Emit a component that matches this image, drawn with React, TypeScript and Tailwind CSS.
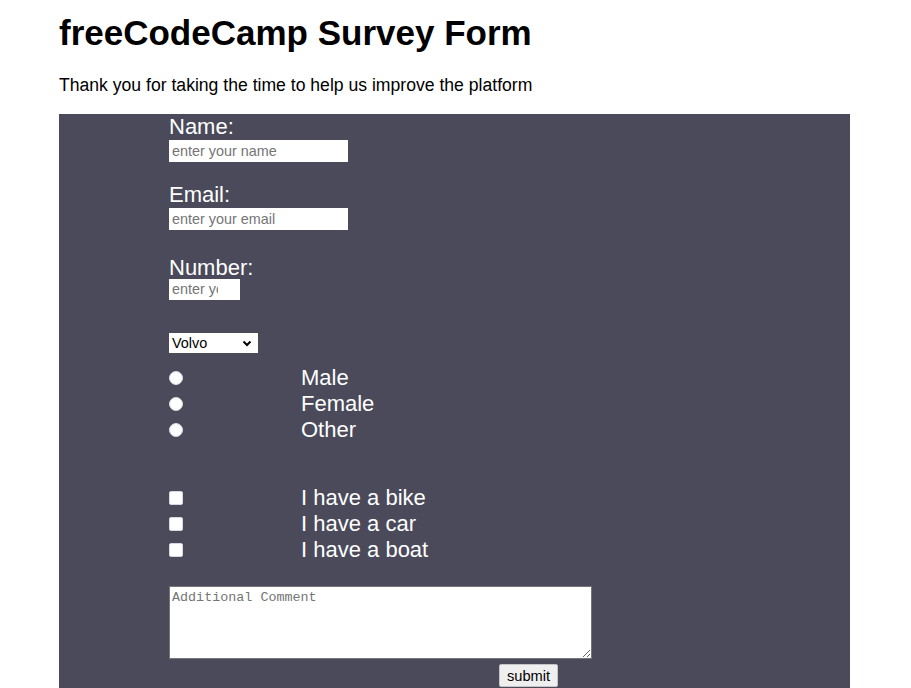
export default function App() {
  const genders = ['Male', 'Female', 'Other']
  const vehicles = ['I have a bike', 'I have a car', 'I have a boat']

  return (
    <div className="min-h-screen bg-white text-black font-['Liberation_Sans',Arial,sans-serif]">
      <div className="ml-[59px] w-[791px]">
        <h1 className="pt-[13px] text-[35px] font-bold leading-[40px]">freeCodeCamp Survey Form</h1>
        <p className="mt-[22px] text-[17.6px] leading-[20px]">
          Thank you for taking the time to help us improve the platform
        </p>

        <form className="mt-[19px] bg-[#4a4a5b] pl-[110px] pt-[0px] pb-[12px] text-white" onSubmit={(e) => e.preventDefault()}>
          <label className="block text-[22px] leading-[25px]" htmlFor="name">Name:</label>
          <input
            id="name"
            type="text"
            placeholder="enter your name"
            className="mt-[1px] block h-[22px] w-[179px] bg-white px-[3px] text-[14.4px] text-black placeholder:text-[#757575] outline-none"
          />

          <label className="mt-[20px] block text-[22px] leading-[25px]" htmlFor="email">Email:</label>
          <input
            id="email"
            type="email"
            placeholder="enter your email"
            className="mt-[1px] block h-[22px] w-[179px] bg-white px-[3px] text-[14.4px] text-black placeholder:text-[#757575] outline-none"
          />

          <label className="mt-[25px] block text-[22px] leading-[25px]" htmlFor="number">Number:</label>
          <input
            id="number"
            type="text"
            placeholder="enter your number"
            className="-mt-px block h-[21px] w-[71px] bg-white pl-[3px] pr-[22px] text-[14.4px] text-black placeholder:text-[#757575] outline-none"
          />

          <div className="mt-[33px] flex h-[20px] w-[89px] items-center justify-between bg-white pl-[3px] pr-[6px] text-[14.4px] text-black">
            <span className="pt-[1px]">Volvo</span>
            <svg width="10" height="7" viewBox="0 0 10 7">
              <path d="M1.5 1.5 L5 5 L8.5 1.5" stroke="black" strokeWidth="2" fill="none" />
            </svg>
          </div>

          <div className="mt-[12px]">
            {genders.map((g) => (
              <div key={g} className="flex h-[26px] items-center">
                <span className="h-[14px] w-[14px] rounded-full border border-[#d8d8dc] bg-white"></span>
                <span className="ml-[118px] text-[22px] leading-[25px] -translate-y-px">{g}</span>
              </div>
            ))}
          </div>

          <div className="mt-[42px]">
            {vehicles.map((v) => (
              <div key={v} className="flex h-[26px] items-center">
                <span className="h-[14px] w-[14px] rounded-[2px] border border-[#d8d8dc] bg-white"></span>
                <span className="ml-[118px] text-[22px] leading-[25px] -translate-y-px">{v}</span>
              </div>
            ))}
          </div>

          <textarea
            placeholder="Additional Comment"
            className="mt-[23px] block h-[73px] w-[423px] border border-[#767676] bg-white px-[2px] py-[1px] font-['Liberation_Mono',monospace] text-[13.4px] text-black placeholder:text-[#757575]"
          ></textarea>

          <button
            type="submit"
            className="ml-[330px] mt-[5px] block h-[23px] w-[59px] rounded-[2px] border border-[#c5c5c5] bg-[#efefef] text-[14.67px] leading-[18px] text-black"
          >
            submit
          </button>
        </form>
      </div>
    </div>
  )
}
